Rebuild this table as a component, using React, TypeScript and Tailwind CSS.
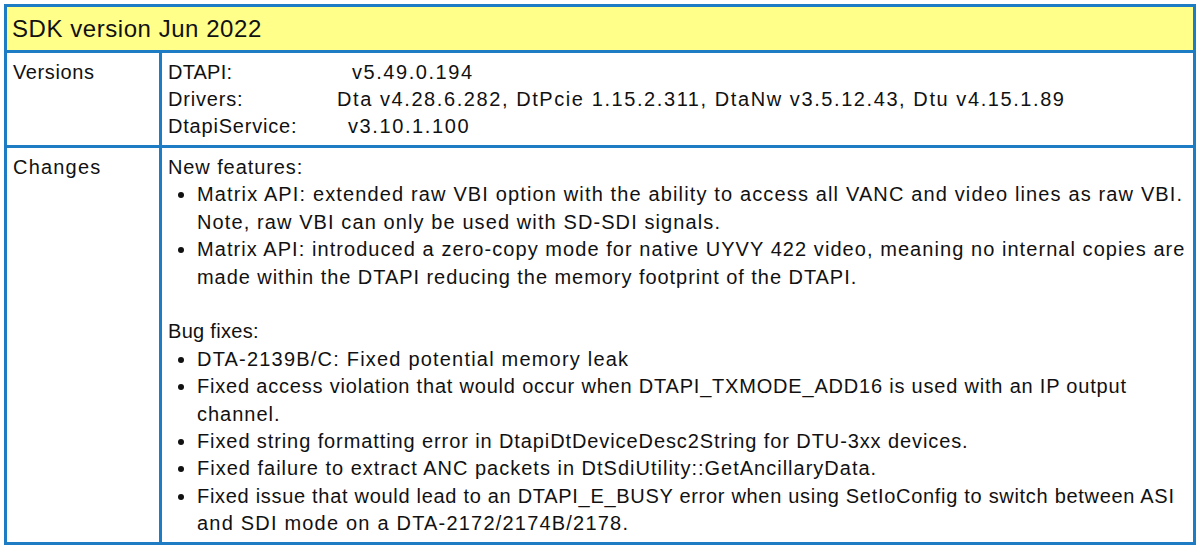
import React from "react";

type Line = { t: string; c: string };

const Dot = () => (
  <span className="w-[29px] shrink-0 flex items-center h-[27.4px]">
    <span className="ml-[10px] w-[6px] h-[6px] rounded-full bg-[#111]" />
  </span>
);

const Item = ({ lines }: { lines: Line[] }) => (
  <div className="flex">
    <Dot />
    <div>
      {lines.map((l, i) => (
        <div key={i} className={"whitespace-nowrap " + l.c}>
          {l.t}
        </div>
      ))}
    </div>
  </div>
);

export default function App() {
  return (
    <div
      className="w-[1200px] h-[550px] bg-white pt-[4px] pl-[4px] text-[#111]"
      style={{ fontFamily: '"Liberation Sans", Arial, sans-serif' }}
    >
      <div className="w-[1192px] border-[3px] border-[#1d7cc4] flex flex-col">
        <div className="h-[46px] bg-[#ffff8a] border-b-[3px] border-[#1d7cc4] flex items-center pl-[5px] text-[24px] tracking-[0.55px]">
          SDK version Jun 2022
        </div>
        <div className="flex h-[95px] border-b-[3px] border-[#1d7cc4] text-[20px] leading-[27px]">
          <div className="w-[155px] shrink-0 border-r-[3px] border-[#1d7cc4] pl-[6px] pt-[6px] tracking-[0.6px]">
            Versions
          </div>
          <div className="pl-[6px] pt-[6px]">
            <div className="flex whitespace-nowrap">
              <span className="w-[184px] shrink-0 tracking-[0.2px]">DTAPI:</span>
              <span className="tracking-[1.55px]">v5.49.0.194</span>
            </div>
            <div className="flex whitespace-nowrap">
              <span className="w-[169px] shrink-0 tracking-[0.8px]">Drivers:</span>
              <span className="tracking-[1.58px]">
                Dta v4.28.6.282, DtPcie 1.15.2.311, DtaNw v3.5.12.43, Dtu v4.15.1.89
              </span>
            </div>
            <div className="flex whitespace-nowrap">
              <span className="w-[180px] shrink-0 tracking-[0.8px]">DtapiService:</span>
              <span className="tracking-[1.6px]">v3.10.1.100</span>
            </div>
          </div>
        </div>
        <div className="flex h-[394px] text-[20px] leading-[27.4px]">
          <div className="w-[155px] shrink-0 border-r-[3px] border-[#1d7cc4] pl-[6px] pt-[6px] tracking-[1.2px]">
            Changes
          </div>
          <div className="pl-[6px] pt-[6px]">
            <div className="tracking-[0.9px]">New features:</div>
            <Item
              lines={[
                {
                  t: "Matrix API: extended raw VBI option with the ability to access all VANC and video lines as raw VBI.",
                  c: "tracking-[1.14px]",
                },
                { t: "Note, raw VBI can only be used with SD-SDI signals.", c: "tracking-[1.1px]" },
              ]}
            />
            <Item
              lines={[
                {
                  t: "Matrix API: introduced a zero-copy mode for native UYVY 422 video, meaning no internal copies are",
                  c: "tracking-[1.06px]",
                },
                {
                  t: "made within the DTAPI reducing the memory footprint of the DTAPI.",
                  c: "tracking-[0.95px]",
                },
              ]}
            />
            <div className="h-[27.4px]" />
            <div className="tracking-[0.3px]">Bug fixes:</div>
            <Item lines={[{ t: "DTA-2139B/C: Fixed potential memory leak", c: "tracking-[1.2px]" }]} />
            <Item
              lines={[
                {
                  t: "Fixed access violation that would occur when DTAPI_TXMODE_ADD16 is used with an IP output",
                  c: "tracking-[0.8px]",
                },
                { t: "channel.", c: "tracking-[1px]" },
              ]}
            />
            <Item
              lines={[
                {
                  t: "Fixed string formatting error in DtapiDtDeviceDesc2String for DTU-3xx devices.",
                  c: "tracking-[0.9px]",
                },
              ]}
            />
            <Item
              lines={[
                {
                  t: "Fixed failure to extract ANC packets in DtSdiUtility::GetAncillaryData.",
                  c: "tracking-[1px]",
                },
              ]}
            />
            <Item
              lines={[
                {
                  t: "Fixed issue that would lead to an DTAPI_E_BUSY error when using SetIoConfig to switch between ASI",
                  c: "tracking-[0.7px]",
                },
                { t: "and SDI mode on a DTA-2172/2174B/2178.", c: "tracking-[1.2px]" },
              ]}
            />
          </div>
        </div>
      </div>
    </div>
  );
}
